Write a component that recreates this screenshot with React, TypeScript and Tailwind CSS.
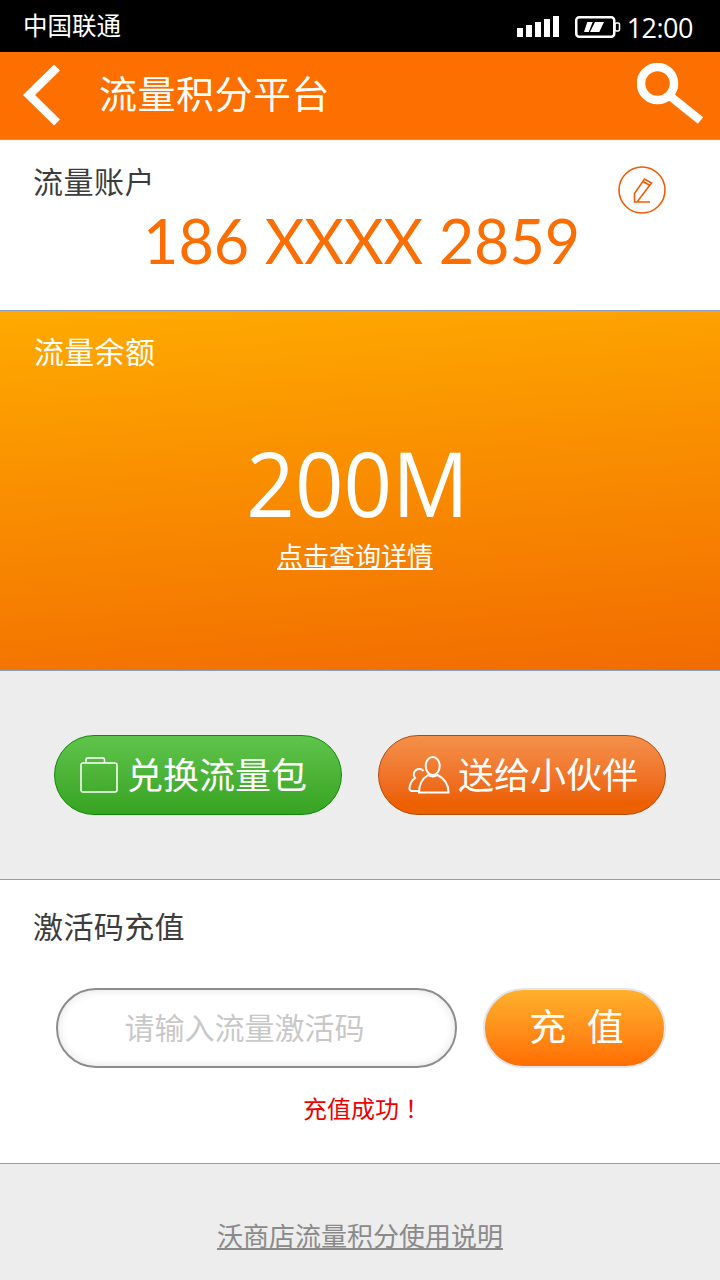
const cjk = "font-['Liberation_Sans','Noto_Sans_CJK_SC',sans-serif]";

function SignalBars() {
	return (
		<svg width="42" height="22" viewBox="0 0 42 22" fill="#fff">
			<rect x="0" y="12" width="6" height="9" />
			<rect x="9" y="9" width="6" height="12" />
			<rect x="18" y="6" width="6" height="15" />
			<rect x="27" y="3" width="6" height="18" />
			<rect x="36" y="0" width="6" height="21" />
		</svg>
	);
}

function Battery() {
	return (
		<svg width="46" height="22" viewBox="0 0 46 22" fill="none">
			<rect x="1.25" y="1.25" width="38" height="19.5" rx="3" stroke="#fff" strokeWidth="2.5" />
			<rect x="40" y="7" width="4.5" height="8" rx="1.5" stroke="#fff" strokeWidth="1.5" />
			<path d="M12.300 6h5.400L13.700 16H9zM20 6h9l-4.700 10H15z" fill="#fff" />
		</svg>
	);
}

function SearchIcon() {
	return (
		<svg width="68" height="64" viewBox="0 0 68 64" fill="none" stroke="#fff">
			<circle cx="20.500" cy="20.500" r="16.500" strokeWidth="8.500" />
			<path d="M33 33 L63.500 57.500" strokeWidth="8.500" />
		</svg>
	);
}

function PencilIcon() {
	return (
		<svg width="48" height="48" viewBox="0 0 48 48" fill="none" stroke="#f25c05" strokeWidth="1.6">
			<circle cx="24" cy="24" r="23" />
			<path d="M16.500 36V27.500L26.500 13l7 4L19 36zM25 15.500l7 4M16.500 36H32" />
		</svg>
	);
}

function FolderIcon() {
	return (
		<svg width="38" height="36" viewBox="0 0 38 36" fill="none" stroke="#fff" strokeWidth="1.5">
			<path d="M6 6V2.500Q6 1 7.500 1H23q1.500 0 1.500 1.500V6" />
			<rect x="1" y="6" width="36" height="29" rx="2" />
		</svg>
	);
}

function PeopleIcon() {
	return (
		<svg width="42" height="38" viewBox="0 0 42 38" fill="none" stroke="#fff" strokeWidth="2">
			<ellipse cx="24.700" cy="10" rx="7" ry="9" />
			<path d="M11 36.500c0-8 3.500-14 9-17.500 3 2 6.500 2 9.500 0 6 3 11 9 11 17.500z" />
			<path d="M15.500 15A5.500 5.500 0 0 0 7 22C3 25 1.500 29 1.500 33q.5 2 2.500 2h7" />
		</svg>
	);
}

export default function App() {
	return (
		<div className={`flex h-[1280px] w-[720px] flex-col overflow-hidden bg-[#ededed] ${cjk}`}>
			{/* status bar */}
			<div className="flex h-[52px] items-center justify-between bg-black pl-[23px] pr-[27px] pt-[2px] text-white">
				<span className="text-[24.500px] leading-none">中国联通</span>
				<div className="flex items-center">
					<SignalBars />
					<span className="ml-4">
						<Battery />
					</span>
					<span className="ml-[6px] font-['Open_Sans',sans-serif] text-[27px] leading-none tracking-[-0.5px]">
						12:00
					</span>
				</div>
			</div>

			{/* title bar */}
			<div className="flex h-[87px] items-center bg-[#fd7000] pb-[2px] pl-[23px] pr-[15px]">
				<svg width="38" height="62" viewBox="0 0 38 62" fill="none" stroke="#fff" strokeWidth="8.500">
					<path d="M34 3.500 L6 31 L34 58.500" />
				</svg>
				<h1 className="ml-[38px] text-[38px] leading-none font-normal tracking-[0.5px] text-white">流量积分平台</h1>
				<div className="ml-auto">
					<SearchIcon />
				</div>
			</div>

			{/* account */}
			<div className="relative h-[171px] border-t border-[#8aa0c0] bg-white pl-[33px] pt-[23px]">
				<div className="text-[30px] leading-[40px] tracking-[0.5px] text-[#3c3c3c]">流量账户</div>
				<div className="absolute right-[54px] top-[26px]">
					<PencilIcon />
				</div>
				<div className="pl-[110px] font-['Lato',sans-serif] text-[61px] leading-[76px] text-[#fb6e04]">
					186 XXXX 2859
				</div>
			</div>

			{/* balance */}
			<div className="flex h-[361px] flex-col border-y border-[#8aa0c0] bg-[linear-gradient(175deg,#ffaa00,#f26c00)] pl-[34px] pt-[22px] text-white">
				<div className="text-[30px] leading-[40px] tracking-[0.3px]">流量余额</div>
				<div className="mt-[54px] scale-y-105 pr-[39px] text-center font-['Open_Sans',sans-serif] text-[85px] leading-[110px]">
					200M
				</div>
				<div className="mt-[2px] pr-[44px] text-center text-[26px] leading-[36px] underline underline-offset-2">
					点击查询详情
				</div>
			</div>

			{/* actions */}
			<div className="flex h-[208px] items-center justify-between px-[54px]">
				<button className="flex h-[80px] w-[288px] items-center rounded-full border-[1.500px] border-[#0f8a05] bg-gradient-to-b from-[#5fc44b] to-[#37a321] pl-[25px] text-[36px] leading-none text-white">
					<FolderIcon />
					<span className="ml-[9px] pt-[3px]">兑换流量包</span>
				</button>
				<button className="flex h-[80px] w-[288px] items-center rounded-full border-[1.500px] border-[#b34a08] bg-gradient-to-b from-[#f49049] to-[#ec6000] to-85% pl-[29px] text-[36px] leading-none text-white">
					<PeopleIcon />
					<span className="ml-[8px] pt-[3px]">送给小伙伴</span>
				</button>
			</div>

			{/* activation code */}
			<div className="h-[285px] border-y border-[#9c9c9c] bg-white pl-[33px] pt-[27px]">
				<div className="text-[30px] leading-[42px] tracking-[0.4px] text-[#3c3c3c]">激活码充值</div>
				<div className="mt-[39px] flex items-center pl-[23px]">
					<div className="flex h-[80px] w-[401px] items-center justify-center rounded-full border-2 border-[#8c8c8c] bg-white pr-[24px] text-[30px] text-[#c8c8c8] shadow-[inset_0_0_10px_rgba(0,0,0,0.12)]">
						请输入流量激活码
					</div>
					<button className="ml-[26px] h-[80px] w-[183px] rounded-full border-2 border-[#e2e6ea] bg-gradient-to-b from-[#ffb02c] to-[#ff6d00] pl-[4px] text-[37px] leading-none text-white">
						充&nbsp;&nbsp;值
					</button>
				</div>
				<div className="mt-[22px] pl-[270px] text-[24px] leading-[36px] text-[#ee0000]">
					充值成功<span className="font-['Noto_Sans_CJK_TC',sans-serif]">！</span>
				</div>
			</div>

			{/* footer link */}
			<div className="flex-1 pt-[55px] text-center text-[26px] leading-[36px] text-[#8a8a8a] underline underline-offset-2">
				沃商店流量积分使用说明
			</div>
		</div>
	);
}
